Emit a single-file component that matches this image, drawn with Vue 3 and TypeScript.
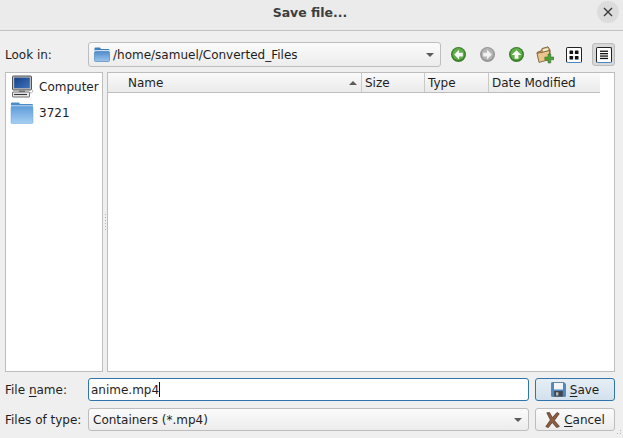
<script setup lang="ts">
interface Col { label: string; width: number; sort?: boolean }
const cols: Col[] = [
  { label: 'Name', width: 254, sort: true },
  { label: 'Size', width: 63 },
  { label: 'Type', width: 64 },
  { label: 'Date Modified', width: 111 },
]
const splitterDots = [1, 2, 3, 4, 5, 6]
</script>

<template>
  <div class="dialog">
    <header class="titlebar">
      <span class="title">Save file...</span>
      <button class="close" aria-label="Close">
        <svg width="10" height="10" viewBox="0 0 10 10"><path d="M1 1L9 9M9 1L1 9" stroke="#3a3a3a" stroke-width="1.4" fill="none" /></svg>
      </button>
    </header>

    <main class="content">
      <div class="lookin">
        <label class="lbl">Look in:</label>
        <div class="combo path">
          <svg class="folder-s" width="16" height="15" viewBox="0 0 16 15">
            <defs>
              <linearGradient id="fs" x1="0" y1="0" x2="0" y2="1"><stop offset="0" stop-color="#4f8ccb" /><stop offset="1" stop-color="#9cc6ee" /></linearGradient>
            </defs>
            <path d="M0.5 3V1.5Q0.5 0.5 1.5 0.5H6L7 2H14.5Q15.5 2 15.5 3V4H0.5Z" fill="#3f7fbe" />
            <rect x="0.5" y="3.2" width="15" height="1.3" fill="#eef5fc" />
            <rect x="0.5" y="4.5" width="15" height="10" rx="1" fill="url(#fs)" stroke="#3f78b4" stroke-width="0.6" />
          </svg>
          <span>/home/samuel/Converted_Files</span>
          <i class="arrow"></i>
        </div>
        <div class="tools">
          <span class="tool">
            <svg width="15" height="15" viewBox="0 0 16 16"><circle cx="8" cy="8" r="8" fill="#3b7f2a" /><circle cx="8" cy="7.5" r="6.4" fill="#62ad4b" /><path d="M8.6 2.8L3.4 8l5.2 5.2V10h4V6h-4Z" fill="#f6f9f4" /></svg>
          </span>
          <span class="tool">
            <svg width="15" height="15" viewBox="0 0 16 16"><circle cx="8" cy="8" r="8" fill="#979797" /><circle cx="8" cy="7.5" r="6.4" fill="#b4b4b4" /><path d="M7.4 2.8L12.6 8l-5.2 5.2V10h-4V6h4Z" fill="#f2f2f2" /></svg>
          </span>
          <span class="tool">
            <svg width="15" height="15" viewBox="0 0 16 16"><circle cx="8" cy="8" r="8" fill="#3b7f2a" /><circle cx="8" cy="7.5" r="6.4" fill="#62ad4b" /><path d="M2.8 8.6L8 3.4l5.2 5.2H10v4H6v-4Z" fill="#f6f9f4" /></svg>
          </span>
          <span class="tool">
            <svg width="18" height="18" viewBox="0 0 18 18">
              <path d="M1 6.5L5.5 4.5L6 2.5L12 0.8L14 4V14H3Z" fill="#c9995a" stroke="#6f5630" stroke-width="0.8" />
              <path d="M6.5 3.2L11.6 1.7L13 4.2L7 6.2Z" fill="#f8efd8" stroke="#a98b57" stroke-width="0.4" />
              <path d="M1 7.2L7 6.2L13.6 4.4L13.6 13.5L3 16.4Z" fill="#eac68c" stroke="#6f5630" stroke-width="0.8" />
              <path d="M12 8h2.8v3H18v2.8h-3.2V17H12v-3.2H8.8V11H12Z" fill="#4f9f3a" stroke="#2f6f22" stroke-width="0.5" />
            </svg>
          </span>
          <span class="tool">
            <span class="view-ic">
              <svg width="14" height="14" viewBox="0 0 14 14"><g fill="#111"><rect x="2.5" y="2.5" width="3.6" height="3.6" rx="0.6" /><rect x="7.9" y="2.5" width="3.6" height="3.6" rx="0.6" /><rect x="2.5" y="7.9" width="3.6" height="3.6" rx="0.6" /><rect x="7.9" y="7.9" width="3.6" height="3.6" rx="0.6" /></g></svg>
            </span>
          </span>
          <span class="tool on">
            <span class="view-ic">
              <svg width="14" height="14" viewBox="0 0 14 14"><g fill="#111"><rect x="3" y="2.6" width="8" height="1.3" /><rect x="3" y="5" width="8" height="1.3" /><rect x="3" y="7.4" width="8" height="1.3" /><rect x="3" y="9.8" width="8" height="1.3" /></g></svg>
            </span>
          </span>
        </div>
      </div>

      <div class="panes">
        <aside class="side">
          <div class="place">
            <svg width="24" height="24" viewBox="0 0 24 24">
              <defs>
                <linearGradient id="scr" x1="0" y1="0" x2="1" y2="1"><stop offset="0" stop-color="#173f86" /><stop offset="1" stop-color="#3c74bd" /></linearGradient>
                <linearGradient id="fl" x1="0" y1="0" x2="0" y2="1"><stop offset="0" stop-color="#5f9dda" /><stop offset="1" stop-color="#a5cff3" /></linearGradient>
              </defs>
              <rect x="2.5" y="1" width="19" height="14" rx="1" fill="#bdbdbd" stroke="#444" stroke-width="0.9" />
              <rect x="4.2" y="2.6" width="15.6" height="10.6" fill="url(#scr)" />
              <rect x="9" y="15.2" width="6" height="1.8" fill="#8a8a8a" />
              <rect x="2.5" y="17" width="17" height="5" rx="0.5" fill="#ececec" stroke="#4c4c4c" stroke-width="0.8" />
              <path d="M4 19.5h13" stroke="#333" stroke-width="1.1" />
              <path d="M19.5 18c3 0 3.5-1 3-3" stroke="#aaa" stroke-width="0.9" fill="none" />
            </svg>
            <span>Computer</span>
          </div>
          <div class="place">
            <svg width="24" height="22" viewBox="0 0 24 22">
              <path d="M1 4V1.5Q1 0.5 2 0.5H9L10 2H22Q23 2 23 3V5H1Z" fill="#4d8cc9" />
              <rect x="1" y="3.4" width="22" height="1.2" fill="#dcebf9" />
              <rect x="1" y="4.6" width="22" height="16.9" rx="1" fill="url(#fl)" stroke="#6ea6da" stroke-width="0.5" />
            </svg>
            <span>3721</span>
          </div>
        </aside>

        <div class="splitter">
          <i v-for="d in splitterDots" :key="d" class="dot"></i>
        </div>

        <section class="list">
          <div class="head">
            <div v-for="c in cols" :key="c.label" class="col" :class="{ sorted: c.sort }" :style="{ width: c.width + 'px' }">
              <span>{{ c.label }}</span>
              <i v-if="c.sort" class="up"></i>
            </div>
          </div>
        </section>
      </div>

      <div class="form">
        <div class="row">
          <label class="lbl">File <u>n</u>ame:</label>
          <div class="input"><span>anime.mp4</span><i class="caret"></i></div>
          <button class="btn primary">
            <svg width="15" height="15" viewBox="0 0 15 15">
              <path d="M0.5 1Q0.5 0.5 1 0.5H13L14.5 2V14Q14.5 14.5 14 14.5H1Q0.5 14.5 0.5 14Z" fill="#4f87bd" stroke="#3f6a94" stroke-width="0.6" />
              <rect x="3" y="1" width="9" height="6.5" fill="#f2f5f8" />
              <rect x="3.2" y="9" width="8.6" height="5.5" fill="#43474d" />
              <rect x="5" y="10.3" width="2.4" height="3.2" fill="#b9bdc2" />
            </svg>
            <span><u>S</u>ave</span>
          </button>
        </div>
        <div class="row">
          <label class="lbl">Files of type:</label>
          <div class="combo type"><span>Containers (*.mp4)</span><i class="arrow"></i></div>
          <button class="btn">
            <svg width="15" height="16" viewBox="0 0 15 16">
              <path d="M1.8 0.8L4.5 0.6L7.4 5.6L12 0.5L14.2 1.8L9.4 8.4L14.4 14.4L11.6 15.6L7.2 10.4L3.4 15.6L0.8 14.6L5.4 8Z" fill="#8d5d3f" stroke="#4f3120" stroke-width="0.7" />
            </svg>
            <span><u>C</u>ancel</span>
          </button>
        </div>
      </div>
    </main>

    <svg class="grip" width="7" height="7" viewBox="0 0 7 7"><g fill="#b5b5b5"><rect x="5" y="0" width="1" height="1" /><rect x="2" y="3" width="1" height="1" /><rect x="5" y="3" width="1" height="1" /></g></svg>
  </div>
</template>

<style scoped>
.dialog {
  position: relative;
  width: 623px;
  height: 438px;
  display: flex;
  flex-direction: column;
  background: #efefef;
  color: #1e1e1e;
  font-family: "DejaVu Sans", sans-serif;
  font-size: 12px;
  overflow: hidden;
}
.titlebar {
  height: 30px;
  flex: none;
  position: relative;
  display: flex;
  align-items: center;
  justify-content: center;
  background: #ebebeb;
  border-bottom: 1px solid #c2c2c2;
  padding-right: 3px;
}
.title {
  font-weight: 700;
  font-size: 12.5px;
  color: #3d3d3d;
  margin-bottom: 6px;
}
.close {
  position: absolute;
  right: 4px;
  top: 1px;
  width: 22px;
  height: 22px;
  border: 0;
  border-radius: 50%;
  background: #dcdcdc;
  display: flex;
  align-items: center;
  justify-content: center;
  padding: 0;
}
.content {
  flex: 1;
  display: flex;
  flex-direction: column;
  padding: 11px 8px 7px 5px;
}
.lookin {
  display: flex;
  align-items: center;
  height: 25px;
}
.lbl {
  width: 83px;
  flex: none;
}
.combo {
  display: flex;
  align-items: center;
  border: 1px solid #bdbdbd;
  border-radius: 3px;
  background: linear-gradient(#fbfbfb, #ececec);
  position: relative;
  box-sizing: border-box;
}
.path {
  width: 353px;
  height: 25px;
  padding-left: 5px;
  gap: 3px;
}
.arrow {
  position: absolute;
  right: 6px;
  top: 50%;
  margin-top: -2px;
  width: 0;
  height: 0;
  border-left: 4px solid transparent;
  border-right: 4px solid transparent;
  border-top: 4px solid #5a5a5a;
}
.tools {
  display: flex;
  align-items: center;
  margin-left: 3px;
  gap: 1px;
}
.tool {
  width: 28px;
  height: 24px;
  display: flex;
  align-items: center;
  justify-content: center;
  box-sizing: border-box;
  border-radius: 3px;
}
.tool.on {
  width: 23px;
  height: 23px;
  background: #d8d8d8;
  border: 1px solid #bcbcbc;
  margin-left: 3px;
}
.view-ic {
  width: 16px;
  height: 16px;
  flex: none;
  box-sizing: border-box;
  display: block;
  background: #fff;
  border: 1px solid #222;
  border-bottom-color: #4a86c0;
  border-radius: 2px;
}
.view-ic svg { display: block; margin: 0; }
.panes {
  flex: 1;
  display: flex;
  margin-top: 5px;
  min-height: 0;
}
.side {
  width: 98px;
  flex: none;
  box-sizing: border-box;
  background: #fff;
  border: 1px solid #bdbdbd;
  padding-top: 1px;
}
.splitter {
  width: 4px;
  flex: none;
  display: flex;
  flex-direction: column;
  align-items: center;
  justify-content: center;
  gap: 2px;
}
.dot {
  width: 1px;
  height: 1px;
  background: #b4b4b4;
}
.place {
  height: 26px;
  display: flex;
  align-items: center;
  gap: 5px;
  padding-left: 4px;
}
.place svg { flex: none; }
.list {
  flex: 1;
  background: #fff;
  border: 1px solid #bdbdbd;
}
.head {
  display: flex;
  height: 19px;
  border-bottom: 1px solid #bdbdbd;
  width: 492px;
  background: linear-gradient(#fafafa, #eaeaea);
}
.col {
  box-sizing: border-box;
  display: flex;
  align-items: center;
  padding-left: 3px;
  border-right: 1px solid #c9c9c9;
  position: relative;
}
.col:last-child { border-right: 0; }
.col.sorted { padding-left: 20px; }
.up {
  position: absolute;
  right: 4px;
  top: 8px;
  width: 0;
  height: 0;
  border-left: 4px solid transparent;
  border-right: 4px solid transparent;
  border-bottom: 4px solid #5a5a5a;
}
.form {
  margin-top: 6px;
  display: flex;
  flex-direction: column;
  gap: 7px;
}
.row {
  display: flex;
  align-items: center;
  height: 23px;
}
.input {
  width: 441px;
  height: 23px;
  box-sizing: border-box;
  border: 1px solid #2f74ad;
  border-radius: 3px;
  background: #fff;
  display: flex;
  align-items: center;
  padding-left: 2px;
}
.caret {
  width: 1px;
  height: 15px;
  background: #111;
}
.type {
  width: 441px;
  height: 23px;
  padding-left: 4px;
}
.btn {
  width: 80px;
  height: 23px;
  margin-left: 6px;
  box-sizing: border-box;
  border: 1px solid #bdbdbd;
  border-radius: 3px;
  background: linear-gradient(#fbfbfb, #ececec);
  display: flex;
  align-items: center;
  justify-content: center;
  gap: 4px;
  padding: 0;
  font: inherit;
  color: inherit;
}
.btn.primary {
  border-color: #2f74ad;
  background: linear-gradient(#e6eef5, #d3e1ed);
}
.grip {
  position: absolute;
  right: 1px;
  bottom: 1px;
}
u { text-underline-offset: 2px; }
</style>
